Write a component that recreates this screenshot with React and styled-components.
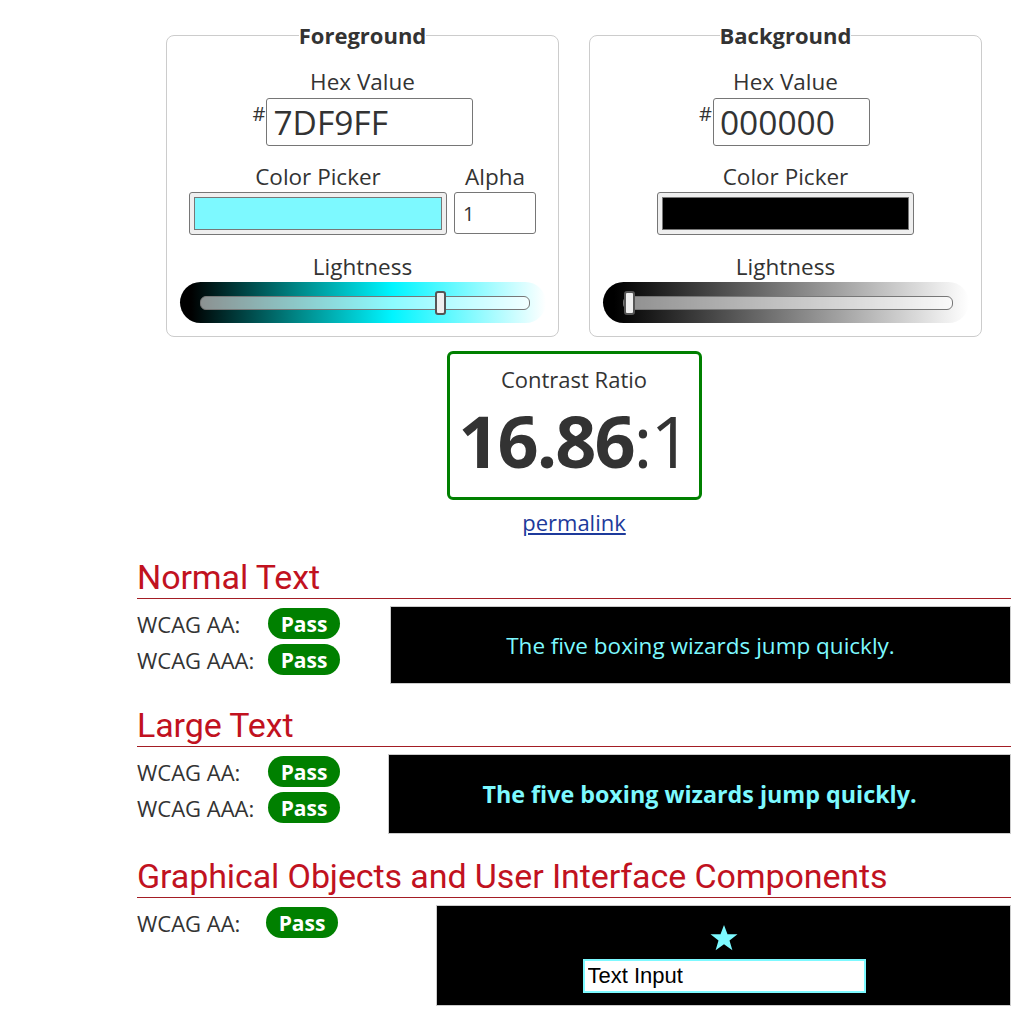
import React from 'react'
import styled, { createGlobalStyle } from 'styled-components'

const GlobalStyle = createGlobalStyle`
    html, body {
        margin: 0;
        padding: 0;
        background: #fff;
    }
    body {
        font-family: "Open Sans", "Noto Sans", sans-serif;
        color: #333;
    }
`

const Page = styled.div`
    width: 874px;
    margin-left: 137px;
    padding-top: 21px;
`

const PickerRow = styled.div`
    display: flex;
    justify-content: center;
    gap: 30px;
`

const Fieldset = styled.fieldset`
    width: 393px;
    box-sizing: border-box;
    margin: 0;
    padding: 0 12px 13px;
    border: 1px solid #ccc;
    border-radius: 8px;
    display: flex;
    flex-direction: column;
    align-items: center;
`

const Legend = styled.legend`
    font-size: 22px;
    font-weight: 700;
    padding: 0;
    margin: 0 auto;
    line-height: 28px;
`

const Label = styled.div`
    font-size: 22.5px;
    line-height: 30px;
    text-align: center;
`

const HexLabel = styled(Label)`
    margin-top: 18px;
`

const HexLine = styled.div`
    display: flex;
    align-items: flex-start;
    margin-top: 1px;
    margin-left: ${p => p.$shift || 0}px;
`

const Hash = styled.span`
    font-size: 20px;
    line-height: 20px;
    margin-top: 6px;
    margin-right: 1px;
`

const HexInput = styled.input`
    width: ${p => p.$w}px;
    height: 48px;
    box-sizing: border-box;
    border: 1px solid #767676;
    border-radius: 3px;
    padding: 0 6px;
    font-family: "Open Sans", sans-serif;
    font-size: 33.5px;
    color: #333;
    outline: none;
`

const PickRow = styled.div`
    display: flex;
    gap: 7px;
    margin-top: 16px;
`

const PickCol = styled.div`
    display: flex;
    flex-direction: column;
    align-items: center;
`

const Swatch = styled.div`
    width: ${p => p.$w}px;
    height: 43px;
    box-sizing: border-box;
    border: 1px solid #767676;
    border-radius: 3px;
    background: #efefef;
    padding: 4px;
`

const SwatchFill = styled.div`
    height: 100%;
    background: ${p => p.$color};
    border: 1px solid #777;
    box-sizing: border-box;
`

const AlphaInput = styled.input`
    width: 82px;
    height: 42px;
    box-sizing: border-box;
    border: 1px solid #767676;
    border-radius: 3px;
    padding: 0 8px;
    font-family: "Open Sans", sans-serif;
    font-size: 20px;
    color: #333;
`

const LightLabel = styled(Label)`
    margin-top: 17px;
`

const SliderBg = styled.div`
    width: 366px;
    height: 41px;
    border-radius: 21px;
    background: ${p => p.$gradient};
    display: flex;
    align-items: center;
    padding: 0 16px 0 20px;
    box-sizing: border-box;
`

const Range = styled.input`
    -webkit-appearance: none;
    appearance: none;
    width: 100%;
    height: 12px;
    margin: 0;
    border-radius: 6px;
    border: 1px solid #777;
    background: rgba(255, 255, 255, 0.55);
    &::-webkit-slider-thumb {
        -webkit-appearance: none;
        width: 11px;
        height: 24px;
        border-radius: 3px;
        background: #efefef;
        border: 2px solid #555;
        box-sizing: border-box;
    }
`

const RatioWrap = styled.div`
    display: flex;
    flex-direction: column;
    align-items: center;
    margin-top: 14px;
`

const RatioBox = styled.div`
    width: 255px;
    height: 149px;
    box-sizing: border-box;
    border: 3px solid #008000;
    border-radius: 6px;
    display: flex;
    flex-direction: column;
    align-items: center;
    padding-top: 13px;
`

const RatioTitle = styled.div`
    font-size: 22px;
    line-height: 24px;
`

const RatioValue = styled.div`
    font-size: 72px;
    line-height: 98px;
    letter-spacing: -2px;
    b {
        font-weight: 700;
    }
    span {
        font-weight: 400;
    }
`

const Permalink = styled.a`
    font-size: 22px;
    line-height: 30px;
    color: #1d3a9b;
    text-decoration: underline;
    margin-top: 7px;
`

const Section = styled.section`
    margin-top: ${p => p.$top}px;
`

const Heading = styled.h2`
    font-family: Roboto, "Open Sans", sans-serif;
    font-weight: 400;
    font-size: 34px;
    line-height: 36px;
    letter-spacing: -0.1px;
    color: #c1121f;
    margin: 0;
    padding-bottom: 3px;
    border-bottom: 1px solid #a31d24;
`

const ResultRow = styled.div`
    display: flex;
    align-items: flex-start;
    margin-top: 7px;
`

const Results = styled.div`
    width: ${p => p.$w}px;
    flex-shrink: 0;
    display: flex;
    flex-direction: column;
    gap: 5px;
    padding-top: 2px;
`

const ResultLine = styled.div`
    display: flex;
    align-items: center;
    font-size: 22px;
    height: 31px;
`

const ResultLabel = styled.span`
    width: ${p => p.$w || 131}px;
`

const Badge = styled.span`
    display: inline-flex;
    align-items: center;
    justify-content: center;
    width: 72px;
    height: 31px;
    border-radius: 16px;
    background: #008000;
    color: #fff;
    font-weight: 700;
    font-size: 21px;
`

const Sample = styled.div`
    flex: 1;
    height: ${p => p.$h}px;
    box-sizing: border-box;
    background: #000;
    border: 1px solid #ccc;
    display: flex;
    flex-direction: column;
    align-items: center;
    justify-content: center;
    color: #7df9ff;
    font-size: ${p => (p.$bold ? 23.3 : 22.5)}px;
    font-weight: ${p => (p.$bold ? 700 : 400)};
`

const Star = styled.svg`
    width: 30px;
    height: 30px;
    margin-top: 4px;
`

const DemoInput = styled.input`
    width: 283px;
    height: 34px;
    box-sizing: border-box;
    border: 2px solid #7df9ff;
    background: #fff;
    font-family: "Liberation Sans", Arial, sans-serif;
    font-size: 22px;
    padding: 0 3px;
    color: #000;
    margin-top: 6px;
    margin-left: 1px;
`

function ColorPanel({ title, hex, color, gradient, value, alpha, hexShift, hexW, pickW }) {
    return (
        <Fieldset>
            <Legend>{title}</Legend>
            <HexLabel>Hex Value</HexLabel>
            <HexLine $shift={hexShift}>
                <Hash>#</Hash>
                <HexInput $w={hexW} defaultValue={hex} />
            </HexLine>
            <PickRow>
                <PickCol>
                    <Label>Color Picker</Label>
                    <Swatch $w={pickW}>
                        <SwatchFill $color={color} />
                    </Swatch>
                </PickCol>
                {alpha && (
                    <PickCol>
                        <Label>Alpha</Label>
                        <AlphaInput defaultValue="1" />
                    </PickCol>
                )}
            </PickRow>
            <LightLabel>Lightness</LightLabel>
            <SliderBg $gradient={gradient}>
                <Range type="range" min="0" max="100" defaultValue={value} />
            </SliderBg>
        </Fieldset>
    )
}

function Result({ label, width }) {
    return (
        <ResultLine>
            <ResultLabel $w={width}>{label}</ResultLabel>
            <Badge>Pass</Badge>
        </ResultLine>
    )
}

export default function App() {
    return (
        <>
            <GlobalStyle />
            <Page>
                <PickerRow>
                    <ColorPanel
                        title="Foreground"
                        hex="7DF9FF"
                        color="#7df9ff"
                        gradient="linear-gradient(to right, #000 3%, #008b8b 33%, #00f5ff 58%, #ffffff 100%)"
                        value={74}
                        alpha
                        hexShift={1}
                        hexW={207}
                        pickW={258}
                    />
                    <ColorPanel
                        title="Background"
                        hex="000000"
                        color="#000"
                        gradient="linear-gradient(to right, #000 3%, #fff 100%)"
                        value={0}
                        hexShift={-2}
                        hexW={157}
                        pickW={257}
                    />
                </PickerRow>
                <RatioWrap>
                    <RatioBox>
                        <RatioTitle>Contrast Ratio</RatioTitle>
                        <RatioValue>
                            <b>16.86</b>
                            <span>:1</span>
                        </RatioValue>
                    </RatioBox>
                    <Permalink href="#">permalink</Permalink>
                </RatioWrap>

                <Section $top={22}>
                    <Heading>Normal Text</Heading>
                    <ResultRow>
                        <Results $w={253}>
                            <Result label="WCAG AA:" />
                            <Result label="WCAG AAA:" />
                        </Results>
                        <Sample $h={78}>The five boxing wizards jump quickly.</Sample>
                    </ResultRow>
                </Section>

                <Section $top={23}>
                    <Heading>Large Text</Heading>
                    <ResultRow>
                        <Results $w={251}>
                            <Result label="WCAG AA:" />
                            <Result label="WCAG AAA:" />
                        </Results>
                        <Sample $h={80} $bold>The five boxing wizards jump quickly.</Sample>
                    </ResultRow>
                </Section>

                <Section $top={24}>
                    <Heading>Graphical Objects and User Interface Components</Heading>
                    <ResultRow>
                        <Results $w={299}>
                            <Result label="WCAG AA:" width={129} />
                        </Results>
                        <Sample $h={101}>
                            <Star viewBox="0 0 24 24">
                                <polygon
                                    points="12,1.5 14.8,9 22.8,9 16.4,13.9 18.7,21.7 12,17 5.3,21.7 7.6,13.9 1.2,9 9.2,9"
                                    fill="#7df9ff"
                                />
                            </Star>
                            <DemoInput defaultValue="Text Input" />
                        </Sample>
                    </ResultRow>
                </Section>
            </Page>
        </>
    )
}
